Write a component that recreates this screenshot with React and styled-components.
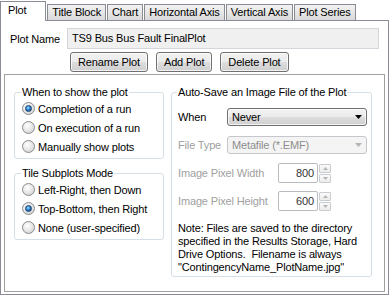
import React from "react"
import styled, { createGlobalStyle, css } from "styled-components"

const GlobalStyle = createGlobalStyle`
  html, body {
    margin: 0;
    padding: 0;
    background: #ffffff;
  }
  body {
    font-family: "Liberation Sans", Arial, sans-serif;
    font-size: 11px;
    letter-spacing: -0.15px;
    color: #000000;
  }
`

const COLORS = {
  tabBorder: "#898c95",
  frame: "#a0a0a0",
  group: "#d5dfe5",
  disabled: "#a0a0a0",
  buttonBorder: "#707070",
}

const winButton = css`
  border: 1px solid ${COLORS.buttonBorder};
  border-radius: 3px;
  background: linear-gradient(
    to bottom,
    #f2f2f2 0%,
    #ebebeb 48%,
    #dddddd 52%,
    #cfcfcf 100%
  );
  box-shadow: inset 0 0 0 1px rgba(255, 255, 255, 0.75);
`

const tabs = ["Plot", "Title Block", "Chart", "Horizontal Axis", "Vertical Axis", "Plot Series"]

export default function App() {
  const [showMode, setShowMode] = React.useState(0)
  const [tileMode, setTileMode] = React.useState(1)

  const showOptions = ["Completion of a run", "On execution of a run", "Manually show plots"]
  const tileOptions = ["Left-Right, then Down", "Top-Bottom, then Right", "None (user-specified)"]

  return (
    <Window>
      <GlobalStyle />
      <TabStrip>
        {tabs.map((t, i) => (
          <Tab key={t} $active={i === 0}>
            {t}
          </Tab>
        ))}
      </TabStrip>

      <Panel>
        <NameRow>
          <NameLabel>Plot Name</NameLabel>
          <NameInput>TS9 Bus Bus Fault FinalPlot</NameInput>
        </NameRow>

        <ButtonRow>
          <Button>Rename Plot</Button>
          <Button>Add Plot</Button>
          <Button>Delete Plot</Button>
        </ButtonRow>

        <Frame>
          <Column>
            <Group $width={150}>
              <Legend>When to show the plot</Legend>
              {showOptions.map((o, i) => (
                <RadioRow key={o} onClick={() => setShowMode(i)}>
                  <Radio $checked={showMode === i} />
                  {o}
                </RadioRow>
              ))}
            </Group>

            <Group $width={150} $top={8}>
              <Legend>Tile Subplots Mode</Legend>
              {tileOptions.map((o, i) => (
                <RadioRow key={o} onClick={() => setTileMode(i)}>
                  <Radio $checked={tileMode === i} />
                  {o}
                </RadioRow>
              ))}
            </Group>
          </Column>

          <Column>
            <Group $width={201} $padLeft={6}>
              <Legend>Auto-Save an Image File of the Plot</Legend>
              <FieldRows>
                <FieldRow>
                  <FieldLabel $w={49}>When</FieldLabel>
                  <Combo>
                    Never
                    <Arrow />
                  </Combo>
                </FieldRow>
                <FieldRow>
                  <FieldLabel $w={49} $disabled>
                    File Type
                  </FieldLabel>
                  <Combo $disabled>
                    Metafile (*.EMF)
                    <Arrow $disabled />
                  </Combo>
                </FieldRow>
                <FieldRow>
                  <FieldLabel $w={100} $disabled>
                    Image Pixel Width
                  </FieldLabel>
                  <Spinner value="800" />
                </FieldRow>
                <FieldRow>
                  <FieldLabel $w={100} $disabled>
                    Image Pixel Height
                  </FieldLabel>
                  <Spinner value="600" />
                </FieldRow>
              </FieldRows>
              <Note>
                Note: Files are saved to the directory
                <br />
                specified in the Results Storage, Hard
                <br />
                Drive Options.&nbsp; Filename is always
                <br />
                "ContingencyName_PlotName.jpg"
              </Note>
            </Group>
          </Column>
        </Frame>
      </Panel>
    </Window>
  )
}

const Arrow = ({ $disabled }) => (
  <ArrowBox>
    <svg width="7" height="4" viewBox="0 0 7 4">
      <path d="M0 0 H7 L3.5 4 Z" fill={$disabled ? "#b4b4b4" : "#000000"} />
    </svg>
  </ArrowBox>
)

const Spinner = ({ value }) => (
  <SpinWrap>
    <SpinInput>{value}</SpinInput>
    <SpinButtons>
      <SpinButton>
        <svg width="5" height="3" viewBox="0 0 5 3">
          <path d="M0 3 H5 L2.5 0 Z" fill="#b4b4b4" />
        </svg>
      </SpinButton>
      <SpinButton>
        <svg width="5" height="3" viewBox="0 0 5 3">
          <path d="M0 0 H5 L2.5 3 Z" fill="#b4b4b4" />
        </svg>
      </SpinButton>
    </SpinButtons>
  </SpinWrap>
)

const Window = styled.div`
  width: 389px;
  height: 296px;
  background: #ffffff;
  display: flex;
  flex-direction: column;
`

const TabStrip = styled.div`
  display: flex;
  align-items: flex-end;
  gap: 1px;
  height: 20px;
  position: relative;
  z-index: 1;
`

const Tab = styled.div`
  box-sizing: border-box;
  height: 16px;
  padding: 0 4px;
  line-height: 15px;
  border: 1px solid ${COLORS.tabBorder};
  border-bottom: none;
  background: linear-gradient(to bottom, #f2f2f2 0%, #e6e6e6 50%, #d9d9d9 100%);
  white-space: nowrap;

  ${(p) =>
    p.$active &&
    css`
      height: 20px;
      margin-bottom: -1px;
      padding: 0 19px 0 7px;
      line-height: 17px;
      background: #ffffff;
    `}
`

const Panel = styled.div`
  box-sizing: border-box;
  height: 275px;
  border: 1px solid ${COLORS.tabBorder};
  display: flex;
  flex-direction: column;
  background: #ffffff;
`

const NameRow = styled.div`
  display: flex;
  align-items: center;
  margin-top: 7px;
  padding-left: 9px;
`

const NameLabel = styled.span`
  width: 57px;
`

const NameInput = styled.div`
  box-sizing: border-box;
  width: 312px;
  height: 21px;
  line-height: 19px;
  padding-left: 4px;
  border: 1px solid #d3d7dc;
  background: #f0f0f0;
`

const ButtonRow = styled.div`
  display: flex;
  gap: 8px;
  margin-top: 3px;
  padding-left: 69px;
`

const Button = styled.div`
  box-sizing: border-box;
  height: 20px;
  line-height: 18px;
  padding: 0 7px;
  ${winButton}
`

const Frame = styled.div`
  box-sizing: border-box;
  height: 218px;
  margin: 2px 3px 0;
  border: 1px solid ${COLORS.frame};
  display: flex;
  gap: 7px;
  padding: 11px 0 0 9px;
`

const Column = styled.div`
  display: flex;
  flex-direction: column;
`

const Group = styled.fieldset`
  box-sizing: border-box;
  width: ${(p) => p.$width}px;
  margin: ${(p) => p.$top || 0}px 0 0;
  padding: 0 4px 2px ${(p) => p.$padLeft || 7}px;
  border: 1px solid ${COLORS.group};
  border-radius: 3px;
  min-width: 0;
`

const Legend = styled.legend`
  padding: 0 1px;
  margin-left: -1px;
  line-height: 13px;
  white-space: nowrap;
`

const RadioRow = styled.div`
  display: flex;
  align-items: center;
  height: 19px;
  gap: 3px;
  white-space: nowrap;
  cursor: default;
`

const Radio = styled.span`
  box-sizing: border-box;
  width: 13px;
  height: 13px;
  border-radius: 50%;
  border: 1px solid #8a8c8e;
  background: radial-gradient(circle at 40% 35%, #ffffff 0%, #e6e6e6 50%, #c9c9c9 100%);
  display: flex;
  align-items: center;
  justify-content: center;
  flex: none;

  &::after {
    content: "";
    display: ${(p) => (p.$checked ? "block" : "none")};
    width: 7px;
    height: 7px;
    border-radius: 50%;
    box-sizing: border-box;
    border: 1px solid #1b3f6a;
    background: radial-gradient(circle at 40% 35%, #9fdcff 0%, #2d86d3 45%, #0e3f7c 100%);
  }
`

const FieldRows = styled.div`
  display: flex;
  flex-direction: column;
  padding-top: 4px;
`

const FieldRow = styled.div`
  display: flex;
  align-items: center;
  height: 28px;
`

const FieldLabel = styled.span`
  width: ${(p) => p.$w}px;
  flex: none;
  white-space: nowrap;
  color: ${(p) => (p.$disabled ? COLORS.disabled : "#000000")};
`

const Combo = styled.div`
  box-sizing: border-box;
  width: 140px;
  height: 18px;
  line-height: 16px;
  padding-left: 4px;
  display: flex;
  align-items: center;
  justify-content: space-between;
  ${(p) =>
    p.$disabled
      ? css`
          border: 1px solid #c4c8cc;
          border-radius: 3px;
          background: #f4f4f4;
          color: #8e8e8e;
        `
      : winButton}
`

const ArrowBox = styled.span`
  display: flex;
  align-items: center;
  padding-right: 4px;
`

const SpinWrap = styled.div`
  display: flex;
  align-items: center;
  gap: 1px;
`

const SpinInput = styled.div`
  box-sizing: border-box;
  width: 40px;
  height: 20px;
  line-height: 18px;
  padding-right: 3px;
  text-align: right;
  border: 1px solid #b8bcc1;
  border-radius: 2px;
  background: #ffffff;
  color: #333333;
`

const SpinButtons = styled.div`
  display: flex;
  flex-direction: column;
  gap: 1px;
`

const SpinButton = styled.div`
  box-sizing: border-box;
  width: 12px;
  height: 9px;
  border: 1px solid #c9cdd1;
  border-radius: 1px;
  background: linear-gradient(to bottom, #fafafa, #ececec);
  display: flex;
  align-items: center;
  justify-content: center;
`

const Note = styled.div`
  margin-top: 7px;
  line-height: 13px;
  white-space: nowrap;
`
